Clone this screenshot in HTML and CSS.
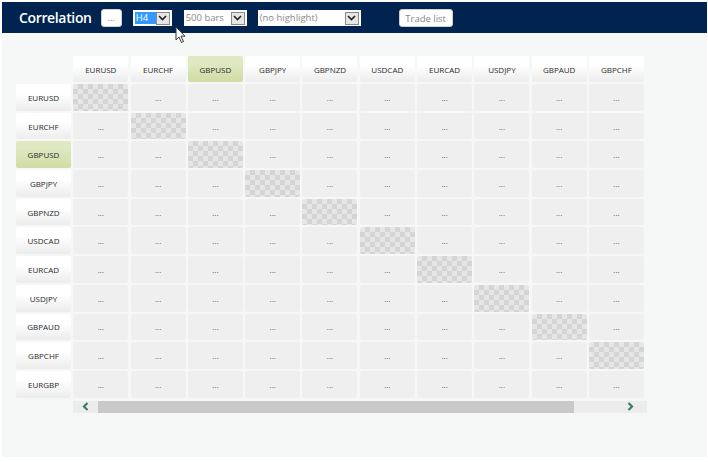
FILE: index.html
```html
<!DOCTYPE html>
<html>
<head>
<meta charset="utf-8">
<link rel="stylesheet" href="styles.css">
</head>
<body>
<div class="app">
  <header class="topbar">
    <h1 class="title">Correlation</h1>
    <button class="btn btn-dots">...</button>
    <div class="sel sel-tf"><span class="sel-text sel-focus">H4</span><span class="sel-arrow"><svg width="9" height="6" viewBox="0 0 9 6"><path d="M1 1 L4.5 4.5 L8 1" fill="none" stroke="#222" stroke-width="1.6"/></svg></span></div>
    <div class="sel sel-bars"><span class="sel-text">500 bars</span><span class="sel-arrow"><svg width="9" height="6" viewBox="0 0 9 6"><path d="M1 1 L4.5 4.5 L8 1" fill="none" stroke="#222" stroke-width="1.6"/></svg></span></div>
    <div class="sel sel-hl"><span class="sel-text">(no highlight)</span><span class="sel-arrow"><svg width="9" height="6" viewBox="0 0 9 6"><path d="M1 1 L4.5 4.5 L8 1" fill="none" stroke="#222" stroke-width="1.6"/></svg></span></div>
    <button class="btn btn-trade">Trade list</button>
    <svg class="cursor" width="12" height="18" viewBox="0 0 12 18"><path d="M1 1 L1 14 L4 11 L6.5 16.5 L8.5 15.5 L6 10.2 L10 10.2 Z" fill="#fff" stroke="#333" stroke-width="1"/></svg>
  </header>
  <main class="content">
    <div class="viewport">
      <div class="matrix" id="matrix"></div>
    </div>
    <div class="scrollbar">
      <span class="sb-arrow sb-left"><svg width="7" height="9" viewBox="0 0 7 9"><path d="M5.5 1 L2 4.5 L5.5 8" fill="none" stroke="#3f7d6b" stroke-width="2.2"/></svg></span>
      <span class="sb-thumb"></span>
      <span class="sb-arrow sb-right"><svg width="7" height="9" viewBox="0 0 7 9"><path d="M1.5 1 L5 4.5 L1.5 8" fill="none" stroke="#3f7d6b" stroke-width="2.2"/></svg></span>
    </div>
  </main>
</div>
<script>
(function(){
  var cols=["EURUSD","EURCHF","GBPUSD","GBPJPY","GBPNZD","USDCAD","EURCAD","USDJPY","GBPAUD","GBPCHF"];
  var rows=cols.concat(["EURGBP"]);
  var hl="GBPUSD";
  var m=document.getElementById("matrix");
  function el(cls,txt){var d=document.createElement("div");d.className=cls;if(txt)d.textContent=txt;m.appendChild(d);}
  el("corner");
  cols.forEach(function(s){el("hcell"+(s===hl?" hl":""),s);});
  rows.forEach(function(r,i){
    el("hcell rowh"+(r===hl?" hl":""),r);
    cols.forEach(function(c,j){
      if(i===j) el("cell diag"); else el("cell","...");
    });
  });
})();
</script>
</body>
</html>
```

FILE: styles.css
```css
html, body {
  margin: 0;
  padding: 0;
  background: #ffffff;
}
body {
  font-family: "Open Sans", "DejaVu Sans", sans-serif;
}
.app {
  margin: 2px;
  width: 705px;
  height: 455px;
  background: #f6f8f8;
  display: flex;
  flex-direction: column;
}
.topbar {
  position: relative;
  height: 31px;
  background: #00234f;
  display: flex;
  align-items: center;
  padding-left: 17px;
  box-sizing: border-box;
}
.title {
  margin: 0 9px 0 0;
  font-size: 14px;
  font-weight: 600;
  color: #ffffff;
  letter-spacing: -0.35px;
}
.btn {
  height: 18px;
  background: #ffffff;
  border: 1px solid #d0d0d0;
  border-radius: 3px;
  font-family: "Open Sans", sans-serif;
  font-size: 9px;
  color: #888;
  padding: 0;
  margin-top: 1px;
  box-sizing: border-box;
}
.btn-dots {
  width: 21px;
  margin-right: 11px;
  line-height: 14px;
}
.btn-trade {
  width: 54px;
  margin-left: 38px;
  font-size: 9.5px;
}
.sel {
  height: 16px;
  background: #ffffff;
  display: flex;
  align-items: center;
  justify-content: space-between;
  box-sizing: border-box;
  padding: 0 2px 0 2px;
  margin-top: 1px;
}
.sel-tf { width: 39px; margin-right: 12px; }
.sel-bars { width: 63px; margin-right: 11px; }
.sel-hl { width: 103px; }
.sel-text {
  font-size: 9.5px;
  color: #8a8a8a;
  line-height: 12px;
  white-space: nowrap;
}
.sel-focus {
  background: #3399ff;
  color: #ffffff;
  width: 21px;
  height: 12px;
  padding-left: 1px;
  box-sizing: border-box;
}
.sel-arrow {
  width: 14px;
  height: 13px;
  box-sizing: border-box;
  border: 1px solid #8a8a8a;
  background: #e6e6e6;
  display: flex;
  align-items: center;
  justify-content: center;
}
.cursor {
  position: absolute;
  left: 173px;
  top: 24px;
}
.content {
  padding: 23px 0 0 14px;
}
.viewport {
  width: 630px;
  overflow: hidden;
}
.matrix {
  display: grid;
  grid-template-columns: repeat(11, 55px);
  grid-template-rows: 26px repeat(11, 26.7px);
  column-gap: 2.3px;
  row-gap: 2px;
  width: max-content;
}
.hcell {
  background: linear-gradient(#ffffff 35%, #ececec);
  border-radius: 2px;
  font-size: 8px;
  color: #2a2a2a;
  display: flex;
  align-items: center;
  justify-content: center;
}
.hcell.hl {
  background: linear-gradient(#dfe8c1 30%, #d0dca4);
}
.cell {
  background: #efefef;
  border-radius: 2px;
  font-size: 8px;
  color: #555;
  display: flex;
  align-items: center;
  justify-content: center;
}
.cell.diag {
  background-color: #e6e6e6;
  background-image:
    linear-gradient(45deg, #d5d5d5 25%, transparent 25%, transparent 75%, #d5d5d5 75%),
    linear-gradient(45deg, #d5d5d5 25%, transparent 25%, transparent 75%, #d5d5d5 75%);
  background-size: 10px 10px;
  background-position: 0 0, 5px 5px;
}
.scrollbar {
  margin: 3px 0 0 57px;
  width: 574px;
  height: 12px;
  background: #ececec;
  display: flex;
  align-items: center;
}
.sb-arrow {
  flex: 0 0 25px;
  display: flex;
  justify-content: center;
  align-items: center;
}
.sb-thumb {
  flex: 0 0 476px;
  height: 12px;
  background: #c9c9c9;
}
.sb-right {
  margin-left: 44px;
}
```
